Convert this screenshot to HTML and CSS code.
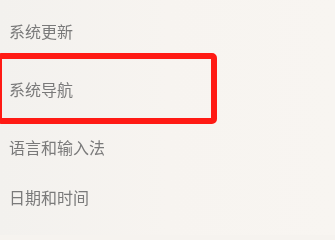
FILE: index.html
```html
<!DOCTYPE html>
<html lang="zh-CN">
<head>
<meta charset="utf-8">
<title>设置</title>
<link rel="stylesheet" href="styles.css">
</head>
<body>
<div class="screen">
  <ul class="settings">
    <li class="item">系统更新</li>
    <li class="item">系统导航</li>
    <li class="item">语言和输入法</li>
    <li class="item item-tight">日期和时间</li>
  </ul>
  <div class="highlight"></div>
</div>
</body>
</html>
```
FILE: styles.css
```css
html, body {
  margin: 0;
  padding: 0;
  background: #f6f3ef;
}
.screen {
  position: relative;
  width: 335px;
  height: 235px;
  overflow: hidden;
  background: linear-gradient(90deg, #f3f1ee 0%, #f7f4f0 50%, #f8f5f1 100%);
}
.settings {
  list-style: none;
  margin: 0;
  padding: 21px 0 0 9px;
  display: flex;
  flex-direction: column;
  gap: 38px;
}
.item {
  font-family: "Noto Sans CJK SC", "Noto Sans", sans-serif;
  font-size: 16px;
  line-height: 20px;
  height: 20px;
  color: #7a7a7a;
  filter: blur(0.3px);
}
.item-tight {
  margin-top: -8px;
}
.highlight {
  position: absolute;
  left: -4px;
  top: 53px;
  width: 209px;
  height: 59px;
  border: 6px solid #ff1a14;
  border-radius: 5px;
  filter: blur(0.3px);
}
```
